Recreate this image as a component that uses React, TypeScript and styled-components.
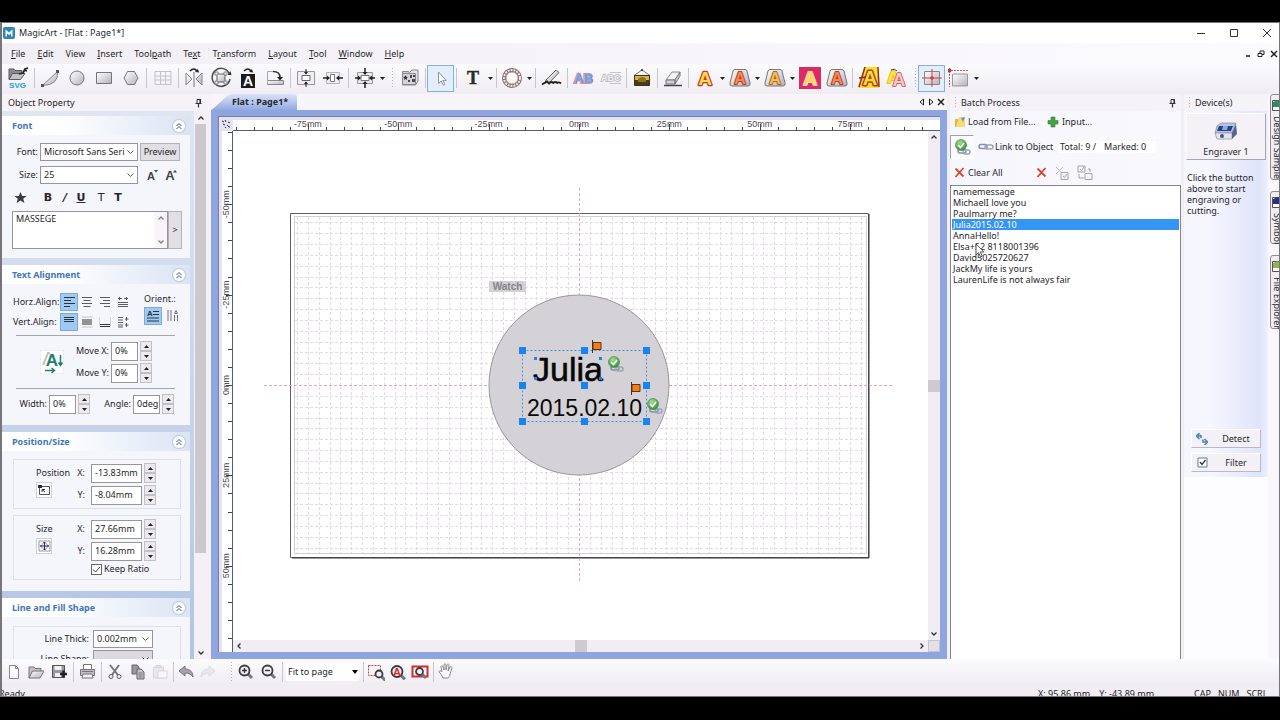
import React, { ReactNode } from "react";
import styled, { createGlobalStyle, css } from "styled-components";

const uiFont = `"Noto Sans", "Liberation Sans", sans-serif`;

const GlobalStyle = createGlobalStyle`
  *, *::before, *::after { box-sizing: border-box; }
  body { margin: 0; background: #000; color: #26262b; font: 9px/12px ${uiFont}; }
  button, input, select, textarea { font: inherit; color: inherit; margin: 0; padding: 0; border-radius: 0; }
  button { background: none; border: 0; white-space: nowrap; }
  svg { display: block; flex: none; }
`;

/* ---------- window ---------- */

const Screen = styled.div`
  height: 100vh;
  min-height: 480px;
  padding: 22px 0 23px;
  display: flex;
  flex-direction: column;
`;
const AppWindow = styled.div`
  flex: 1;
  min-height: 0;
  display: flex;
  flex-direction: column;
  overflow: hidden;
  background: #f9f7fb;
  border: 1px solid #77757a;
  border-width: 1px 1px 1px 2px;
`;
const TitleBar = styled.header`
  flex: none;
  height: 20px;
  display: flex;
  align-items: center;
  gap: 4px;
  padding: 0 7px 0 1px;
  background: #fff;
`;
const Title = styled.h1`
  flex: 1;
  margin: 0;
  font-size: 9px;
  font-weight: 400;
`;
const WindowButtons = styled.div`
  display: flex;
  gap: 23px;
`;
const PlainButton = styled.button`
  display: flex;
  align-items: center;
  justify-content: center;
  min-width: 10px;
  min-height: 10px;
`;
const MenuBar = styled.nav`
  flex: none;
  height: 21px;
  display: flex;
  align-items: center;
  justify-content: space-between;
  padding-left: 9px;
  background: linear-gradient(90deg, #f2eff4, #fbfafd);
`;
const MenuList = styled.div`
  display: flex;
  gap: 12px;
`;
const ChildButtons = styled.div`
  display: flex;
  gap: 3px;
`;

/* ---------- tool bars ---------- */

const Toolbar = styled.div<{ $h: number }>`
  flex: none;
  height: ${(p) => p.$h}px;
  display: flex;
  align-items: center;
  padding: 0 0 2px 1px;
  background: linear-gradient(180deg, #fbfafc, #efedf2);
`;
const ToolButton = styled.button<{ $w?: number; $on?: boolean; $dim?: boolean }>`
  flex: none;
  width: ${(p) => p.$w ?? 27}px;
  height: 27px;
  display: flex;
  align-items: center;
  justify-content: center;
  opacity: ${(p) => (p.$dim ? 0.4 : 1)};
  ${(p) =>
    p.$on &&
    css`
      background: #e3eefa;
      border: 1px solid #7fb2de;
    `}
`;
const Separator = styled.span<{ $w?: number }>`
  flex: none;
  width: ${(p) => p.$w ?? 4}px;
  height: 20px;
  background: linear-gradient(#c9c6cd, #c9c6cd) center / 1px 100% no-repeat;
`;
const Grip = styled.span<{ $h?: number; $gap?: number }>`
  flex: none;
  width: 4px;
  height: ${(p) => p.$h ?? 20}px;
  margin-left: ${(p) => p.$gap ?? 0}px;
  background: repeating-linear-gradient(180deg, #b5b2ba 0 1px, transparent 1px 3px) 1px 0 / 1px 100% no-repeat;
`;
const ZoomSelect = styled.select`
  width: 73px;
  height: 18px;
  margin: 0 2px;
  padding-left: 2px;
  border: 0;
  appearance: none;
  background: #fff url("data:image/svg+xml,%3Csvg xmlns='http://www.w3.org/2000/svg' width='6' height='4'%3E%3Cpath d='M0 0h6L3 4z'/%3E%3C/svg%3E") right 1px center no-repeat;
`;
const StatusBar = styled.footer`
  flex: none;
  height: 10px;
  display: flex;
  padding-top: 2px;
  overflow: hidden;
  background: #f0eef2;
  white-space: pre;
`;
const StatusReady = styled.span`
  flex: 1;
  margin-left: -3px;
`;
const StatusCoords = styled.span`
  display: flex;
  gap: 9px;
  width: 156px;
`;
const StatusKeys = styled.span`
  display: flex;
  gap: 7px;
  width: 85px;
`;

/* ---------- docking layout ---------- */

const Work = styled.main`
  flex: 1;
  min-height: 0;
  display: flex;
`;
const PanelHeader = styled.div`
  flex: none;
  height: 17px;
  display: flex;
  align-items: center;
  gap: 3px;
  background: #f5f3f7;
  h2 { flex: 1; margin: 0; font-size: 9px; font-weight: 400; }
`;
const LeftPanel = styled.aside`
  flex: none;
  width: 209px;
  display: flex;
  flex-direction: column;
  background: #f5f0f5;
  ${PanelHeader} { padding: 0 8px 0 6px; }
`;
const LeftBody = styled.div`
  flex: 1;
  min-height: 0;
  display: flex;
`;
const Groups = styled.div`
  flex: 1;
  min-width: 0;
  overflow: hidden;
  display: flex;
  flex-direction: column;
  gap: 7px;
  padding: 5px 4px 0 0;
  background: linear-gradient(180deg, #dfe6f2, #b2c4e4);
`;
const Group = styled.section`
  flex: none;
  background: #f5f5fc;
`;
const GroupHeader = styled.header`
  height: 19px;
  display: flex;
  align-items: center;
  justify-content: space-between;
  padding: 0 5px 0 10px;
  background: linear-gradient(90deg, #fff 30%, #dbe4f4);
  h3 { margin: 0; font-size: 9px; font-weight: 700; color: #3f76b8; }
`;
const RoundButton = styled.button`
  width: 12px;
  height: 12px;
  border-radius: 50%;
  background: #fff;
  box-shadow: 0 0 1px 1px #b9c9e0;
  display: flex;
  align-items: center;
  justify-content: center;
`;
const GroupBody = styled.div<{ $pad: string; $gap?: number }>`
  display: flex;
  flex-direction: column;
  gap: ${(p) => p.$gap ?? 0}px;
  padding: ${(p) => p.$pad};
`;
const Row = styled.div<{ $h?: number; $gap?: number; $pad?: string; $items?: string }>`
  display: flex;
  align-items: ${(p) => p.$items ?? "center"};
  height: ${(p) => (p.$h ? p.$h + "px" : "auto")};
  gap: ${(p) => p.$gap ?? 2}px;
  padding: ${(p) => p.$pad ?? "0"};
`;
const Column = styled.div<{ $gap?: number; $w?: number; $pad?: string }>`
  display: flex;
  flex-direction: column;
  gap: ${(p) => p.$gap ?? 2}px;
  width: ${(p) => (p.$w ? p.$w + "px" : "auto")};
  padding: ${(p) => p.$pad ?? "0"};
`;
const Label = styled.label<{ $w?: number; $left?: boolean; $end?: number }>`
  flex: none;
  width: ${(p) => (p.$w ? p.$w + "px" : "auto")};
  padding-right: ${(p) => p.$end ?? 0}px;
  text-align: ${(p) => (p.$left ? "left" : "right")};
  white-space: nowrap;
`;
const Select = styled.select<{ $w: number; $grey?: boolean }>`
  flex: none;
  width: ${(p) => p.$w}px;
  height: 18px;
  padding: 0 12px 0 3px;
  border: 1px solid #98969c;
  appearance: none;
  background: ${(p) => (p.$grey ? "#dcdade" : "#fff")}
    url("data:image/svg+xml,%3Csvg xmlns='http://www.w3.org/2000/svg' width='7' height='5'%3E%3Cpath d='M0.5 0.5l3 3 3-3' fill='none' stroke='%23555'/%3E%3C/svg%3E") right 3px center no-repeat;
`;
const PushButton = styled.button<{ $w: number; $h?: number }>`
  flex: none;
  width: ${(p) => p.$w}px;
  height: ${(p) => p.$h ?? 18}px;
  background: #e1dfe3;
  border: 1px solid #b4b2b7;
  display: flex;
  align-items: center;
  justify-content: center;
`;
const GlyphButton = styled.button<{ $on?: boolean; $w?: number; $light?: boolean }>`
  flex: none;
  width: ${(p) => p.$w ?? 18}px;
  height: 18px;
  display: flex;
  align-items: center;
  justify-content: center;
  font: ${(p) => (p.$light ? 400 : 700)} 11px/14px "DejaVu Sans", sans-serif;
  ${(p) =>
    p.$on &&
    css`
      background: #a0caf6;
      border: 1px solid #7fa9da;
    `}
`;
const MessageBox = styled.div`
  flex: none;
  width: 156px;
  height: 38px;
  display: flex;
  border: 1px solid #98969c;
  background: #fff;
`;
const MessageText = styled.textarea`
  flex: 1;
  min-width: 0;
  border: 0;
  resize: none;
  overflow: hidden;
  padding: 1px 3px;
  background: none;
`;
const ScrollTrack = styled.div<{ $w: number }>`
  flex: none;
  width: ${(p) => p.$w}px;
  display: flex;
  flex-direction: column;
  align-items: center;
  justify-content: space-between;
  background: #f3eff4;
  opacity: 0.6;
`;
const Divider = styled.hr`
  width: 159px;
  height: 1px;
  margin: 0;
  border: 0;
  background: #a6a4ac;
`;
const NumberInput = styled.input<{ $w: number }>`
  flex: none;
  width: ${(p) => p.$w}px;
  height: 19px;
  padding: 0 0 1px 3px;
  border: 1px solid #98969c;
  background: #fff;
`;
const Spinner = styled.div`
  flex: none;
  width: 12px;
  height: 20px;
  display: flex;
  flex-direction: column;
  button {
    flex: 1;
    display: flex;
    align-items: center;
    justify-content: center;
    border: 1px solid #c2c0c5;
    background: #eceaee;
  }
`;
const Frame = styled.div<{ $pad: string }>`
  display: flex;
  padding: ${(p) => p.$pad};
  border: 1px solid #dfdfe8;
`;
const CheckBox = styled.input`
  appearance: none;
  width: 11px;
  height: 11px;
  border: 1px solid #666;
  background: #fff url("data:image/svg+xml,%3Csvg xmlns='http://www.w3.org/2000/svg' width='9' height='9'%3E%3Cpath d='M1 4.5l2.5 2.5L8 2' fill='none' stroke='%23444'/%3E%3C/svg%3E") center no-repeat;
`;
const TinyButton = styled.button`
  width: 16px;
  height: 16px;
  border: 1px solid #d0d0d8;
  background: #fff;
  display: flex;
  align-items: center;
  justify-content: center;
`;
const SideScroll = styled.div`
  flex: none;
  width: 17px;
  display: flex;
  flex-direction: column;
  align-items: center;
  padding: 1px 4px 0 0;
`;
const SideThumb = styled.div`
  width: 11px;
  flex: 0 1 429px;
  margin-bottom: auto;
  background: #cbc9cd;
`;
const ScrollButton = styled.button`
  flex: none;
  width: 12px;
  height: 12px;
  display: flex;
  align-items: center;
  justify-content: center;
`;

/* ---------- document ---------- */

const DocumentArea = styled.section`
  flex: 1;
  min-width: 0;
  display: flex;
  flex-direction: column;
  background: #f7f5f9;
`;
const TabRow = styled.div`
  flex: none;
  height: 16px;
  display: flex;
  justify-content: space-between;
`;
const DocTab = styled.button`
  width: 86px;
  height: 16px;
  padding-left: 21px;
  text-align: left;
  font-weight: 700;
  background: linear-gradient(180deg, #dbe2f6, #93aae2);
  clip-path: polygon(0 100%, 4px 13px, 16px 2px, 20px 0, 84px 0, 100% 2px, 100% 100%);
`;
const TabControls = styled.div`
  display: flex;
  align-items: center;
  padding-right: 1px;
`;
const BlueFrame = styled.div`
  flex: 1;
  min-height: 0;
  display: flex;
  padding: 6px 7px 7px;
  background: #8fa5df;
`;
const Sheet = styled.div`
  flex: 1;
  min-width: 0;
  display: grid;
  grid-template: 14px minmax(0, 1fr) 12px / 14px minmax(0, 1fr) 12px;
  border: 1px solid #7b7f96;
  border-width: 1px 0 0 1px;
  background: #e3e3f4;
`;
const RulerCorner = styled.div`
  display: flex;
  align-items: center;
  justify-content: center;
`;
const TopRuler = styled.svg`
  grid-column: 2 / 4;
  width: 100%;
  height: 14px;
`;
const LeftRuler = styled.svg`
  grid-row: 2 / 4;
  width: 14px;
  height: 100%;
`;
const Drawing = styled.svg`
  width: 100%;
  height: 100%;
  background: #fff;
`;
const BarV = styled.div`
  display: flex;
  flex-direction: column;
  align-items: center;
  justify-content: space-between;
  background: #f1eef3;
`;
const BarH = styled.div`
  display: flex;
  align-items: center;
  justify-content: space-between;
  background: #f1eef3;
`;
const Thumb = styled.div`
  width: 12px;
  height: 12px;
  background: #cdcbcf;
`;
const Corner = styled.div`
  border: 1px solid #c6c4c9;
  background: #e3dfe4;
`;

/* ---------- batch + device panels ---------- */

const BatchPanel = styled.aside`
  flex: none;
  width: 237px;
  display: flex;
  flex-direction: column;
  padding: 0 3px;
  background: #f2eff4;
  ${PanelHeader} { padding: 0 4px; }
`;
const BatchTools = styled.div`
  flex: none;
  height: 74px;
  background: linear-gradient(90deg, #f6f6fd, #f9f8fc);
`;
const CommandButton = styled.button<{ $w?: number; $gap?: number }>`
  display: flex;
  align-items: center;
  gap: ${(p) => p.$gap ?? 2}px;
  width: ${(p) => (p.$w ? p.$w + "px" : "auto")};
`;
const Toggle = styled.button`
  width: 24px;
  height: 24px;
  display: flex;
  align-items: center;
  justify-content: center;
  border: 1px solid #a3a1a8;
  border-right-color: #fff;
  border-bottom-color: #fff;
  background: #fbfafd;
`;
const Counter = styled.span<{ $w: number }>`
  width: ${(p) => p.$w}px;
  padding-left: 2px;
  background: #fff;
  white-space: nowrap;
`;
const RecordList = styled.ul`
  position: relative;
  flex: 1;
  min-height: 0;
  margin: 0;
  padding: 0 1px;
  list-style: none;
  border: 1px solid #88868c;
  border-bottom: 0;
  background: #fff;
  line-height: 11px;
`;
const Record = styled.li<{ $on?: boolean }>`
  height: 11px;
  padding-left: 1px;
  ${(p) =>
    p.$on &&
    css`
      background: #3595f5;
      color: #fff;
    `}
`;
const Pointer = styled.svg`
  position: absolute;
  left: 24px;
  top: 57px;
`;
const DevicePanel = styled.aside`
  flex: none;
  width: 84px;
  display: flex;
  flex-direction: column;
  background: #fdfcfe;
  ${PanelHeader} { padding-left: 4px; }
`;
const DeviceBody = styled.div`
  flex: 0 1 366px;
  display: flex;
  flex-direction: column;
  padding: 2px 2px 5px 2px;
  background: linear-gradient(90deg, #f6f6ff 30%, #dfe4fa 90%, #eef0fd);
  p { margin: 12px 0 auto 1px; line-height: 11px; }
`;
const DeviceButton = styled.button`
  height: 47px;
  display: flex;
  flex-direction: column;
  align-items: center;
  justify-content: flex-end;
  gap: 4px;
  padding-bottom: 1px;
  border: 1px solid #fff;
  border-right-color: #a6a5b4;
  border-bottom-color: #a6a5b4;
  background: #f4f2f7;
`;
const DeviceAction = styled.button`
  width: 70px;
  height: 19px;
  margin: 0 0 5px 5px;
  display: grid;
  grid-template-columns: 20px 1fr;
  align-items: center;
  border: 1px solid #fff;
  border-right-color: #bab8c6;
  border-bottom-color: #bab8c6;
  background: #f3f1f6;
  svg { justify-self: center; }
  & + & { margin-bottom: 0; }
`;
const SideTabs = styled.div`
  flex: none;
  width: 9px;
  margin-left: 2px;
  display: flex;
  flex-direction: column;
  gap: 11px;
  overflow: hidden;
`;
const SideTab = styled.button<{ $h: number }>`
  flex: none;
  width: 18px;
  height: ${(p) => p.$h}px;
  display: flex;
  flex-direction: column;
  align-items: flex-start;
  gap: 4px;
  padding-top: 3px;
  border: 1px solid #8d8b92;
  border-radius: 3px 0 0 3px;
  background: #f0eef2;
  span { writing-mode: vertical-rl; }
`;

/* ---------- icons ---------- */

const metal = "url(#metal)";

const GradientDefs = styled.svg`
  position: absolute;
`;
const Gradients = () => (
  <GradientDefs width="0" height="0" aria-hidden="true">
    <defs>
      <linearGradient id="metal" x1="0" y1="0" x2="1" y2="1">
        <stop offset="0" stopColor="#fff" />
        <stop offset="1" stopColor="#b4b2b8" />
      </linearGradient>
      <radialGradient id="green" cx="0.4" cy="0.3" r="0.8">
        <stop offset="0" stopColor="#a5dc8e" />
        <stop offset="1" stopColor="#2c8a2f" />
      </radialGradient>
    </defs>
  </GradientDefs>
);

const Art = ({ s = 22, h, children }: { s?: number; h?: number; children: ReactNode }) => (
  <svg width={s} height={h ?? s} viewBox={`0 0 ${s} ${h ?? s}`} fill="none" stroke="#5c5a60" aria-hidden="true">
    {children}
  </svg>
);

const letter = (fill: string, stroke: string, w: number, size = 20, x = 11, y = 18) => (
  <text x={x} y={y} textAnchor="middle" fontFamily="Liberation Sans" fontWeight="700" fontSize={size} fill={fill} stroke={stroke} strokeWidth={w} paintOrder="stroke" strokeLinejoin="round">A</text>
);

const lens = (x: number, y: number, r: number) => (
  <g>
    <path d={`M${x + r * 0.7} ${y + r * 0.7}l4 4`} stroke="#77757b" strokeWidth="3" />
    <circle cx={x} cy={y} r={r} stroke="#3c3a40" strokeWidth="1.8" fill="#f2f0f4" />
  </g>
);

const raisedTile = "M6 2.500h10q1.500 0 2 1.500l3 12q.5 3-2 3H3q-2.500 0-2-3L4 4q.5-1.500 2-1.500z";

const icons: Record<string, ReactNode> = {
  svgFile: (
    <Art>
      <path d="M2 12V2h5l1 1.500h7v3H6z" fill="#8b898f" />
      <path d="M2 12.500L5.500 6.500H18l-4.500 6z" fill="#c3c1c6" />
      <path d="M12 7l4-1 2-4 3-1M17 3l3 1" stroke="#222" strokeWidth="1.800" />
      <text x="10.500" y="21" textAnchor="middle" fontFamily="Liberation Sans" fontWeight="700" fontSize="8" fill="#1f9fd2" stroke="none">SVG</text>
    </Art>
  ),
  curve: (<Art><path d="M3.500 18.500L18.500 4.500Q20 18 3.500 18.500z" fill={metal} stroke="#88868c" /><path d="M2 17h3v3H2zM17 3h3v3h-3z" fill="#555" stroke="none" /></Art>),
  ellipse: (<Art><circle cx="11" cy="11" r="7" fill={metal} stroke="#77757b" /></Art>),
  rect: (<Art><path d="M3.500 5.500h15v11h-15z" fill={metal} stroke="#77757b" /></Art>),
  hexagon: (<Art><path d="M4 11l3.500-6.500h7L18 11l-3.500 6.500h-7z" fill={metal} stroke="#77757b" /></Art>),
  grid: (<Art><path d="M3 4.500h16v13H3zM3 9h16M3 13h16M8.500 4.500v13M13.500 4.500v13" stroke="#c5c3c8" /></Art>),
  mirror: (<Art><path d="M3 6v12l6-6zM19 6v12l-6-6z" fill={metal} stroke="#88868c" /><path d="M11 5v15" stroke="#777" /><path d="M7 4q4-4 7 0" stroke="#222" strokeWidth="1.600" /><path d="M16 5.500l-4-.5 3-3z" fill="#222" stroke="none" /></Art>),
  rotate: (<Art><path d="M19.500 7A9 9 0 1 0 20 12" stroke="#4c4a50" strokeWidth="1.500" /><path d="M17.500 8h4l-1-4z" fill="#333" stroke="none" /><path d="M7 7h8v8H7z" fill={metal} /><path d="M5 5h3v3H5zM14 5h3v3h-3zM5 14h3v3H5zM14 14h3v3h-3z" fill="#eee" stroke="#88868c" /></Art>),
  rotateText: (<Art><path d="M4 7h14v14H4z" fill="#1b1b1d" stroke="none" />{letter("#fff", "none", 0, 14, 11, 19)}<path d="M7 4q4-4 7 0" stroke="#222" strokeWidth="1.500" /><path d="M16 5.500l-4-.5 3-3z" fill="#222" stroke="none" /></Art>),
  turn: (<Art><path d="M3.500 13.500h16v4h-16z" fill={metal} stroke="#88868c" /><path d="M3.500 17V4.500h7" stroke="#aaa8ae" /><path d="M9 4.500q7 0 7 6" stroke="#333" strokeWidth="1.500" /><path d="M13 10h6l-3 3.500z" fill="#222" stroke="none" /></Art>),
  centerV: (<Art><path d="M2.500 4.500h17v13h-17z" stroke="#99979d" fill="#f0eef2" /><path d="M7 8.500h8v5H7z" stroke="#666" fill="#fff" /><path d="M11 2v5M11 20v-5" stroke="#222" /><path d="M9 5l2 2.500L13 5zM9 17l2-2.500 2 2.500z" fill="#222" stroke="none" /></Art>),
  centerH: (<Art><path d="M4.500 5.500h13v11h-13z" stroke="#b5b3b8" fill="#f0eef2" /><path d="M8.500 7.500h4v7h-4z" stroke="#777" fill="#fff" /><path d="M1 11h6M21 11h-6" stroke="#222" strokeWidth="1.500" /><path d="M5 8.500L8 11l-3 2.500zM17 8.500L14 11l3 2.500z" fill="#222" stroke="none" /></Art>),
  centerBoth: (<Art><path d="M3.500 5.500h15v11h-15z" stroke="#99979d" fill="#eceaee" /><path d="M7 8.500h8v5H7z" stroke="#777" fill="#fff" /><path d="M1 11h5M21 11h-5M11 1v6M11 21v-6" stroke="#222" strokeWidth="1.500" /><path d="M4 8.500L7 11l-3 2.500zM18 8.500L15 11l3 2.500zM8.500 5l2.500 3 2.500-3zM8.500 17l2.500-3 2.500 3z" fill="#222" stroke="none" /></Art>),
  library: (<Art><path d="M3.500 4.500h6l1 1.500h6v12h-13z" fill="#d0ced3" stroke="#8a888e" /><path d="M11 5l2-2h6v11l-2.500 4" stroke="#88868c" fill="#e6e4e9" /><path d="M3.500 6.500h13v11h-13z" fill="#d6d4d8" stroke="#8a888e" /><path d="M6.500 8l.8 1.700 1.700.2-1.300 1.200.4 1.800-1.600-.9-1.600.9.4-1.800L4 9.900l1.700-.2z" fill="#333" stroke="none" /><path d="M11 8h2v3h-2zM13 12h3v3h-3zM14 8h2v2h-2zM9 13h2v2H9z" fill="#4c4a50" stroke="none" /></Art>),
  arrow: (<Art><path d="M8.500 5v11.500l2.700-2.500 2 4.200 1.600-.8-2-4h3.400z" fill="#fff" stroke="#8b94a2" /></Art>),
  text: (<Art><text x="11" y="17" textAnchor="middle" fontFamily="Liberation Serif" fontWeight="700" fontSize="18" fill="#2b2b2d" stroke="#2b2b2d" strokeWidth=".4">T</text></Art>),
  ring: (<Art><circle cx="11" cy="11" r="8" stroke="#7d7076" strokeWidth="4" /><circle cx="11" cy="11" r="8" stroke="#f3ebea" strokeWidth="2" strokeDasharray="2 1" /><circle cx="11" cy="11" r="6" fill="#fff" stroke="#c98a86" /></Art>),
  pen: (<Art><path d="M5 13L15 3l3 2.500L9 15l-5 1z" fill={metal} stroke="#66646a" /><path d="M1 17.500l5-3 2 2c2-2 4-2 4 0 1-2 4-2 4 0 1-2 3-1 4 0" stroke="#222" strokeWidth="1.800" /></Art>),
  ab: (<Art><g fontFamily="Liberation Sans" fontWeight="700" fontSize="13" fill="#4db5ec" stroke="#ef7f9e" strokeWidth="2" paintOrder="stroke"><text x="1" y="16">AB</text></g></Art>),
  abc: (<Art><g fontFamily="Liberation Sans" fontWeight="700" fontSize="9" fill="#f4f2f6" stroke="#b5b3b8" strokeWidth="1.400" paintOrder="stroke"><text x="1" y="14">ABC</text></g><path d="M10 5.500h11M10 16.500h11" stroke="#c5c3c8" /></Art>),
  picture: (<Art><path d="M3 8.500L11 3l8 5.500" stroke="#777" /><circle cx="11" cy="3" r="1" fill="#222" stroke="none" /><path d="M3.500 8.500h15v10h-15z" fill="#4a3c10" stroke="#333" /><path d="M4 9h14v4H4z" fill="#d9b43c" stroke="none" /><path d="M7 13a4 3 0 0 1 8 0v2H7z" fill="#8f7420" stroke="none" /></Art>),
  eraser: (<Art><path d="M4 13l6-8h8l-5 8z" fill="#f5f3f7" stroke="#88868c" /><path d="M4 13h9v4H4zM13 13l5-8v4l-5 8z" fill="#d4d2d7" stroke="#77757b" /><path d="M2 18.500h18" stroke="#444" strokeWidth="1.500" /></Art>),
  aPlain: (<Art>{letter("#ffe03a", "#c9304c", 2.5, 19)}</Art>),
  aBox: (<Art><path d={raisedTile} fill={metal} stroke="#77757b" />{letter("#f58a52", "#b5412c", 2, 16, 11, 17)}</Art>),
  aBoxGold: (<Art><path d={raisedTile} fill={metal} stroke="#77757b" />{letter("#f6bf50", "#a9642c", 2, 16, 11, 17)}</Art>),
  aPink: (<Art><path d="M0 0h22v22H0z" fill="#dc2b63" stroke="none" />{letter("#ffdc4e", "#fbd0dc", 2, 19)}</Art>),
  aStripe: (<Art><path d="M6 0h14l1 21H0z" fill="#f9df2f" stroke="none" />{letter("#f9df2f", "#b83a34", 3, 20, 12, 18)}<path d="M7 0L1 20M20 0l1 20M1 11l7-1" stroke="#8a3026" strokeWidth="1.500" /></Art>),
  aDouble: (<Art>{letter("#ffe246", "#e8c31c", 2, 16, 8, 16)}{letter("#f8c9c0", "#c04a50", 1.5, 18, 14, 19)}<path d="M6 3q4-2 6 1" stroke="#444" /></Art>),
  crosshair: (<Art><path d="M3.500 4.500h15v13h-15z" fill={metal} stroke="#88868c" /><path d="M1 11h20M11 2v18" stroke="#cf3e42" /><circle cx="11" cy="11" r="1.800" fill="#cf3e42" stroke="none" /></Art>),
  rulerGuide: (<Art><path d="M4.500 7h15v12h-15z" fill={metal} stroke="#99979d" /><path d="M0 3.500h21M1.500 1v19" stroke="#cf5a5e" strokeDasharray="2 1" /><circle cx="1.500" cy="3.500" r="2" fill="#b13a3e" stroke="none" /></Art>),
  newFile: (<Art s={16}><path d="M3.500 1.500h6l3 3v10h-9z" fill="#fdfdfd" stroke="#88868c" /><path d="M9.500 1.500v3h3" stroke="#88868c" /></Art>),
  open: (<Art s={16}><path d="M1 14V3h5l1 1.500h6V7" fill="#c2c0c5" stroke="#77757b" /><path d="M1 14l3.500-7H16l-4 7z" fill={metal} stroke="#77757b" /></Art>),
  save: (<Art s={16}><path d="M1.500 1.500h12v12h-12z" fill="#99979d" stroke="#555" /><path d="M3.500 2h7v4h-7zM4 9h6v4H4z" fill="#f3f1f5" stroke="none" /><path d="M12.500 6.500v7M9 10h7" stroke="#222" strokeWidth="2.500" /></Art>),
  print: (<Art s={17}><path d="M4.500 1.500h8v5h-8z" fill="#fff" stroke="#77757b" /><path d="M1.500 6.500h14v6h-14z" fill="#c0bec3" stroke="#77757b" /><path d="M4 11h9l1 4H3z" fill="#f3f1f5" stroke="#77757b" /><path d="M3 8.500h11" stroke="#77757b" /></Art>),
  cut: (<Art s={16}><path d="M3 1l8 10M12 1L5 11" stroke="#77757b" strokeWidth="2" /><circle cx="4" cy="12.500" r="2" /><circle cx="12" cy="12.500" r="2" /></Art>),
  copy: (<Art s={16}><path d="M2 1h5l2 2v7H2z" fill="#99979d" stroke="#66646a" /><path d="M7 5h4l3 3v7H7z" fill="#c5c3c8" stroke="#66646a" /><path d="M8.500 9h4M8.500 11h4M8.500 13h4" stroke="#77757b" /></Art>),
  paste: (<Art s={16}><path d="M1.500 3h10v11h-10z" fill="#d8d6da" stroke="#aaa8ad" /><path d="M4 1.500h5v2H4z" fill="#bbb" stroke="#aaa8ad" /><path d="M6 7h9v7H6z" fill="#fff" stroke="#aaa8ad" /></Art>),
  undo: (<Art s={16}><path d="M1 7l6-5v3c5 0 8 3 8 8-2-3-4-4-8-4v3z" fill="#a5a3a8" stroke="#77757b" /></Art>),
  redo: (<Art s={16}><path d="M15 7L9 2v3c-5 0-8 3-8 8 2-3 4-4 8-4v3z" fill="#d9d7dc" stroke="#bab8bd" /></Art>),
  zoomIn: (<Art s={16}>{lens(6.5, 6.5, 5)}<path d="M4 6.500h5M6.500 4v5" stroke="#333" strokeWidth="1.400" /></Art>),
  zoomOut: (<Art s={16}>{lens(6.5, 6.5, 5)}<path d="M4 6.500h5" stroke="#333" strokeWidth="1.400" /></Art>),
  zoomBox: (<Art s={18}><path d="M1.500 2.500h12v10h-12z" stroke="#c4474c" strokeDasharray="2 1" />{lens(12, 11, 3.5)}</Art>),
  zoomText: (<Art s={16}>{lens(7, 7.5, 5.5)}{letter("#d92a2a", "none", 0, 11, 7, 11.5)}</Art>),
  zoomPage: (<Art s={18}><path d="M1.500 3.500h15v10h-15z" stroke="#d92a2a" strokeWidth="2" fill="#fff" />{lens(8.5, 8.5, 3.5)}</Art>),
  hand: (<Art s={17}><path d="M5 15c-1-3-3-5-4-6 0-2 2-1 3 0L3 4c0-2 2-1 2 0l1 3V2c0-2 2-1 2 0v5l1-5c1-2 2-1 2 1l-1 5 2-4c1-1 2 0 2 1l-2 6c0 2-1 3-2 4z" fill="#fbfafc" stroke="#8a888e" /></Art>),
  pin: (<Art s={9} h={10}><path d="M3 1.500h3.500v4H3z" stroke="#333" /><path d="M6 1v5M1.500 5.500h6M4.500 6v3.500" stroke="#333" strokeWidth="1.200" /></Art>),
  chevrons: (<Art s={8}><path d="M1.500 4L4 1.500 6.500 4M1.500 7L4 4.500 6.500 7" stroke="#36547e" /></Art>),
  up: (<Art s={6} h={4}><path d="M.5 3.500L3 1l2.500 2.500" stroke="#333" strokeWidth="1.300" /></Art>),
  down: (<Art s={6} h={4}><path d="M.5 .5L3 3 5.500.5" stroke="#333" strokeWidth="1.300" /></Art>),
  left: (<Art s={4} h={6}><path d="M3.500 .5L1 3l2.500 2.500" stroke="#333" strokeWidth="1.300" /></Art>),
  right: (<Art s={4} h={6}><path d="M.5 .5L3 3 .5 5.500" stroke="#333" strokeWidth="1.300" /></Art>),
  spinUp: (<Art s={5} h={3}><path d="M0 3h5L2.500 0z" fill="#222" stroke="none" /></Art>),
  spinDown: (<Art s={5} h={3}><path d="M0 0h5L2.500 3z" fill="#222" stroke="none" /></Art>),
  close: (<Art s={8}><path d="M1 1l6 6M7 1L1 7" stroke="#222" strokeWidth="1.500" /></Art>),
  smaller: (<Art s={12} h={14}>{letter("#444", "none", 0, 11, 5, 12)}<path d="M8 2h4l-2 2.500z" fill="#444" stroke="none" /></Art>),
  bigger: (<Art s={12} h={14}>{letter("#444", "none", 0, 13, 5, 12)}<path d="M8 4.500h4L10 2z" fill="#444" stroke="none" /></Art>),
  star: (<Art s={13}><path d="M6.500 1l1.700 4H12.500l-3.300 2.700 1.200 4.300-3.900-2.500L2.600 12l1.200-4.300L.5 5h4.300z" fill="#3b393f" stroke="none" /></Art>),
  alignL: (<Art s={12}><path d="M1 1.500h11M1 4.500h7M1 7.500h11M1 10.500h6" stroke="#333" /></Art>),
  alignC: (<Art s={12}><path d="M1 1.500h10M2.500 4.500h7M1 7.500h10M2.500 10.500h7" /></Art>),
  alignR: (<Art s={12}><path d="M1 1.500h10M4 4.500h7M1 7.500h10M5 10.500h6" /></Art>),
  alignJ: (<Art s={12}><path d="M1 2.500h4M7 2.500h4M2.500 1v3M9.500 1v3M1 6.500h10M1 8.500h10M1 10.500h10" /></Art>),
  vTop: (<Art s={12}><path d="M1 1.500h10M1 3.500h10M1 5.500h10" stroke="#333" /></Art>),
  vMid: (<Art s={12}><path d="M1 4h10M1 6h10M1 8h10" stroke="#333" /><path d="M.5 1h11M.5 11h11" stroke="#c5c3c8" /></Art>),
  vBottom: (<Art s={12}><path d="M1 8.500h10M1 10.500h10" stroke="#333" /><path d="M.5 1v9M11.500 1v9" stroke="#d4d2d7" /></Art>),
  vJust: (<Art s={12}><path d="M1 1.500h5M1 4h5M1 6.500h5M1 9h5M1 11h5M9.500 1v4M8 3h3.500M9.500 7v4M8 9h3.500" /></Art>),
  orientH: (<Art s={14}>{letter("#333", "none", 0, 8, 4, 7)}<path d="M7 2.500h6M7 5.500h6M1 9h12M1 12h12" stroke="#333" /></Art>),
  orientV: (<Art s={14}><path d="M2 1v11M5 1v11M8.500 6v6M11.500 6v6M8.500 4.500l1.500-3 1.500 3z" stroke="#77757b" /></Art>),
  warp: (<Art s={24}><path d="M0 0h24v24H0z" fill="#fff" stroke="#dedce6" /><path d="M3 15L8 3h2" stroke="#c4c2c8" strokeWidth="2" />{letter("#1d8068", "none", 0, 17, 12, 16)}<path d="M20.500 5v10M18.500 12.500l2 3 2-3M5 20.500h9M11.500 18l3 2.500-3 2.500" stroke="#1d8068" strokeWidth="1.500" /></Art>),
  anchor: (<Art s={13} h={12}><path d="M1.500 2.500h10v8h-10z" stroke="#555" /><path d="M0 1h4v3H0z" fill="#222a66" stroke="none" /><path d="M7 8L4 5.500M4 8V5.500h3" stroke="#333" /></Art>),
  resize: (<Art s={13} h={12}><path d="M1 1h11v10H1z" stroke="#99979d" /><path d="M6.500 2v8M2.500 6h8M5 3.500L6.500 2 8 3.500M5 8.500L6.500 10 8 8.500M4 4.500L2.500 6 4 7.500M9 4.500L10.500 6 9 7.500" stroke="#23235a" /></Art>),
  folder: (<Art s={12}><path d="M1 3h5v8H1z" fill="#e5b93a" stroke="none" /><path d="M5 1h6v10H2z" fill="#f6dc77" stroke="none" /><path d="M7 2l4-1-2 5z" fill="#6b93c9" stroke="none" /></Art>),
  plus: (<Art s={12}><path d="M4 1h4v3.500h3v3.500H8v3H4V8H1V4.500h3z" fill="#45a344" stroke="#2f7f36" strokeWidth=".6" /></Art>),
  link: (<Art s={16} h={8}><rect x="1" y="1.500" width="8" height="4" rx="2" stroke="#8292ac" strokeWidth="1.500" /><rect x="7" y="2" width="8" height="4" rx="2" stroke="#9aa6ba" strokeWidth="1.500" /></Art>),
  linked: (<Art s={18}><rect x="5" y="11" width="8" height="4" rx="2" stroke="#8292ac" strokeWidth="1.500" /><rect x="10" y="12" width="7" height="4" rx="2" stroke="#9aa6ba" strokeWidth="1.500" /><circle cx="8" cy="7" r="5.500" fill="url(#green)" stroke="#3a7f3c" strokeWidth=".6" /><path d="M5 7l2.500 2.500L11 5" stroke="#fff" strokeWidth="1.600" /></Art>),
  redX: (<Art s={11}><path d="M1.500 1.500l8 8M9.500 1L1.500 10" stroke="#e0452f" strokeWidth="1.800" /></Art>),
  uncheckAll: (<Art s={14}><path d="M1 1l7 7M8 1L1 8" stroke="#bbb9be" /><path d="M6 6.500h7v7H6z" fill="#f3f1f6" stroke="#aaa8ae" /><path d="M8 10l1.500 1.500L12 8" stroke="#aaa8ae" /></Art>),
  invert: (<Art s={16}><path d="M1 1h7v6H1zM8 8.500h7v6H8z" fill="#f7f6fa" stroke="#a3a1a8" /><path d="M3 4l1.500 1.500L7 2M2 9v4h5M11 4h2v3" stroke="#a3a1a8" /></Art>),
  engraver: (<Art s={26} h={20}><path d="M4 4l4-3h15l-4 10H2z" fill="#b9c3dc" stroke="#7f8bab" strokeWidth=".7" /><path d="M6 4h14l-2 5H4z" fill="#28418a" stroke="none" /><path d="M10 4h5l-1 4H9z" fill="#8fa7dc" stroke="none" /><path d="M2 11h17v6H4z" fill="#e3e5ee" stroke="#8c93a8" strokeWidth=".7" /><path d="M19 11l4-9 1 10-5 5z" fill="#56658f" stroke="none" /><circle cx="9" cy="14" r="2" fill="#475680" stroke="none" /></Art>),
  detect: (<Art s={12}><path d="M3 2.500h2M3.500 0L.5 3l3 3M2 3h3v2M8.500 6l3 3-3 3M10 9H7V6.500" stroke="#4a86b8" strokeWidth="1.700" /></Art>),
  filter: (<Art s={11}><path d="M1 1h9v9H1z" fill="#fff" stroke="#66799c" /><path d="M3 5l2 2.500L8.500 3" stroke="#333" strokeWidth="1.300" /></Art>),
};

const tool = (name: string, label: string, props: { $w?: number; $on?: boolean; $dim?: boolean } = {}) => (
  <ToolButton aria-label={label} {...props}>{icons[name]}</ToolButton>
);
const Caret = () => <ToolButton $w={8} aria-label="More options">{icons.spinDown}</ToolButton>;

/* ---------- pieces ---------- */

const menus: [string, number][] = [
  ["File", 0], ["Edit", 0], ["View", -1], ["Insert", 0], ["Toolpath", 4], ["Text", 2],
  ["Transform", 1], ["Layout", 0], ["Tool", 0], ["Window", 0], ["Help", 0],
];

const Spin = ({ name }: { name: string }) => (
  <Spinner>
    <button aria-label={`Increase ${name}`}>{icons.spinUp}</button>
    <button aria-label={`Decrease ${name}`}>{icons.spinDown}</button>
  </Spinner>
);

const NumberField = ({ id, label, lw, w, value, end = 0 }: { id: string; label: string; lw: number; w: number; value: string; end?: number }) => (
  <Row $h={20}>
    <Label htmlFor={id} $w={lw} $end={end}>{label}</Label>
    <NumberInput id={id} $w={w} defaultValue={value} />
    <Spin name={label} />
  </Row>
);

const PropertyGroup = ({ title, children }: { title: string; children: ReactNode }) => (
  <Group>
    <GroupHeader>
      <h3>{title}</h3>
      <RoundButton aria-label={`Collapse ${title}`}>{icons.chevrons}</RoundButton>
    </GroupHeader>
    {children}
  </Group>
);

const ObjectProperty = () => (
  <LeftPanel>
    <PanelHeader>
      <h2>Object Property</h2>
      {icons.pin}
    </PanelHeader>
    <LeftBody>
      <Groups>
        <PropertyGroup title="Font">
          <GroupBody $pad="8px 8px 9px 10px" $gap={5}>
            <Row>
              <Label htmlFor="font" $w={26}>Font:</Label>
              <Select id="font" $w={98}><option>Microsoft Sans Seri</option></Select>
              <PushButton $w={40}>Preview</PushButton>
            </Row>
            <Row>
              <Label htmlFor="size" $w={26}>Size:</Label>
              <Select id="size" $w={98}><option>25</option></Select>
              <Row $gap={1} $pad="0 0 0 3px">
                <GlyphButton aria-label="Smaller text">{icons.smaller}</GlyphButton>
                <GlyphButton aria-label="Larger text">{icons.bigger}</GlyphButton>
              </Row>
            </Row>
            <Row $h={17} $gap={0}>
              <GlyphButton $w={16} aria-label="Favourite">{icons.star}</GlyphButton>
              <Row $gap={0} $pad="0 0 0 11px">
                <GlyphButton>B</GlyphButton>
                <GlyphButton $w={16}><i>/</i></GlyphButton>
                <GlyphButton $w={16}><u>U</u></GlyphButton>
                <GlyphButton $w={24} $light>T</GlyphButton>
                <GlyphButton $w={10}>T</GlyphButton>
              </Row>
            </Row>
            <Row $gap={0}>
              <MessageBox>
                <MessageText aria-label="Message" defaultValue="MASSEGE" />
                <ScrollTrack $w={13}>
                  <ScrollButton aria-label="Scroll up">{icons.up}</ScrollButton>
                  <ScrollButton aria-label="Scroll down">{icons.down}</ScrollButton>
                </ScrollTrack>
              </MessageBox>
              <PushButton $w={14} $h={38}>&gt;</PushButton>
            </Row>
          </GroupBody>
        </PropertyGroup>

        <PropertyGroup title="Text Alignment">
          <GroupBody $pad="9px 8px 11px 11px">
            <Row $gap={12} $items="flex-start">
              <Column>
                <Row $gap={0}>
                  <Label $w={45} $left as="span">Horz.Align:</Label>
                  <Row $gap={0} $pad="0 0 0 2px">
                    <GlyphButton $on aria-label="Left">{icons.alignL}</GlyphButton>
                    <GlyphButton aria-label="Centre">{icons.alignC}</GlyphButton>
                    <GlyphButton aria-label="Right">{icons.alignR}</GlyphButton>
                    <GlyphButton aria-label="Justify">{icons.alignJ}</GlyphButton>
                  </Row>
                </Row>
                <Row $gap={0}>
                  <Label $w={45} $left as="span">Vert.Align:</Label>
                  <Row $gap={0} $pad="0 0 0 2px">
                    <GlyphButton $on aria-label="Top">{icons.vTop}</GlyphButton>
                    <GlyphButton aria-label="Middle">{icons.vMid}</GlyphButton>
                    <GlyphButton aria-label="Bottom">{icons.vBottom}</GlyphButton>
                    <GlyphButton aria-label="Spread">{icons.vJust}</GlyphButton>
                  </Row>
                </Row>
              </Column>
              <Column $gap={2}>
                <Label $left as="span">Orient.:</Label>
                <Row $gap={2}>
                  <GlyphButton $on aria-label="Horizontal">{icons.orientH}</GlyphButton>
                  <GlyphButton aria-label="Vertical">{icons.orientV}</GlyphButton>
                </Row>
              </Column>
            </Row>
            <Row $h={9} $pad="0 0 0 3px"><Divider /></Row>
            <Row $gap={9} $pad="1px 0 0 27px">
              <PlainButton aria-label="Warp text">{icons.warp}</PlainButton>
              <Column>
                <NumberField id="movex" label="Move X:" lw={36} w={27} value="0%" />
                <NumberField id="movey" label="Move Y:" lw={36} w={27} value="0%" />
              </Column>
            </Row>
            <Row $h={11} $pad="0 0 0 3px"><Divider /></Row>
            <Row $gap={9}>
              <NumberField id="width" label="Width:" lw={34} w={27} value="0%" />
              <NumberField id="angle" label="Angle:" lw={32} w={27} value="0deg" />
            </Row>
          </GroupBody>
        </PropertyGroup>

        <PropertyGroup title="Position/Size">
          <GroupBody $pad="8px 9px 11px 11px" $gap={6}>
            <Frame $pad="3px 0 3px 22px">
              <Column $w={33} $gap={3} $pad="4px 0 0">
                <Label as="span" $left>Position</Label>
                <TinyButton aria-label="Anchor">{icons.anchor}</TinyButton>
              </Column>
              <Column>
                <NumberField id="posx" label="X:" lw={20} end={4} w={51} value="-13.83mm" />
                <NumberField id="posy" label="Y:" lw={20} end={4} w={51} value="-8.04mm" />
              </Column>
            </Frame>
            <Frame $pad="3px 0 4px 22px">
              <Column $w={33} $gap={3} $pad="4px 0 0">
                <Label as="span" $left>Size</Label>
                <TinyButton aria-label="Resize">{icons.resize}</TinyButton>
              </Column>
              <Column>
                <NumberField id="sizex" label="X:" lw={20} end={4} w={51} value="27.66mm" />
                <NumberField id="sizey" label="Y:" lw={20} end={4} w={51} value="16.28mm" />
                <Row $pad="0 0 0 22px">
                  <CheckBox type="checkbox" id="ratio" defaultChecked />
                  <Label htmlFor="ratio" $left>Keep Ratio</Label>
                </Row>
              </Column>
            </Frame>
          </GroupBody>
        </PropertyGroup>

        <PropertyGroup title="Line and Fill Shape">
          <GroupBody $pad="9px 9px 9px 11px">
            <Frame $pad="3px 0 3px 0">
              <Column>
                <Row>
                  <Label htmlFor="thick" $w={77} $end={2}>Line Thick:</Label>
                  <Select id="thick" $w={60}><option>0.002mm</option></Select>
                </Row>
                <Row>
                  <Label htmlFor="shape" $w={77} $end={2}>Line Shape:</Label>
                  <Select id="shape" $w={60} $grey><option>———</option></Select>
                </Row>
              </Column>
            </Frame>
          </GroupBody>
        </PropertyGroup>
      </Groups>
      <SideScroll>
        <ScrollButton aria-label="Scroll up">{icons.up}</ScrollButton>
        <SideThumb />
        <ScrollButton aria-label="Scroll down">{icons.down}</ScrollButton>
      </SideScroll>
    </LeftBody>
  </LeftPanel>
);

/* The drawing uses screen pixels; 25 mm on the sheet is about 90 px. */
const MM = 3.615;
const CX = 346;
const CY = 254;
const range = (a: number, b: number) => Array.from({ length: b - a + 1 }, (_, i) => a + i);

const TopScale = () => (
  <TopRuler aria-hidden="true">
    <rect x="0" y="3" width="100%" height="10" fill="#fff" />
    <line x1="0" x2="100%" y1="13.5" y2="13.5" stroke="#55597a" />
    {range(-19, 19).map((i) => {
      const x = Math.round(CX + i * 5 * MM) + 0.5;
      return <line key={i} x1={x} x2={x} y1={i % 5 ? 10 : 7} y2="13" stroke="#444" />;
    })}
    {range(-3, 3).map((i) => (
      <text key={i} x={CX + i * 25 * MM} y="10" textAnchor="middle" fontFamily="Liberation Sans" fontSize="9" fill="#4a4a50">{i * 25}mm</text>
    ))}
  </TopRuler>
);

const SideScale = () => (
  <LeftRuler aria-hidden="true">
    <rect x="3" y="0" width="10" height="100%" fill="#fff" />
    <line x1="13.5" x2="13.5" y1="0" y2="100%" stroke="#55597a" />
    {range(-14, 14).map((i) => {
      const y = Math.round(CY + i * 5 * MM) + 0.5;
      return <line key={i} x1={i % 5 ? 9 : 7} x2="13" y1={y} y2={y} stroke="#444" />;
    })}
    {range(-2, 2).map((i) => (
      <text key={i} transform={`translate(10 ${CY + i * 25 * MM}) rotate(-90)`} textAnchor="middle" fontFamily="Liberation Sans" fontSize="9" fill="#4a4a50">{i * 25}mm</text>
    ))}
  </LeftRuler>
);

const Flag = ({ x, y }: { x: number; y: number }) => (
  <g transform={`translate(${x} ${y})`}>
    <path d="M.5 0v13" stroke="#333" />
    <path d="M1 2.500h8v7H1z" fill="#f57f17" stroke="#5c3510" />
  </g>
);
const LinkMark = ({ x, y }: { x: number; y: number }) => <g transform={`translate(${x} ${y})`}>{icons.linked}</g>;

const Canvas = () => (
  <Drawing role="img" aria-label="Page 1">
    <path d="M57.500 82.500h578v344h-578z" fill="#fff" stroke="#5f5d64" />
    <path d="M59 427h577V83" fill="none" stroke="#333" />
    <path d="M61.500 85.500h572v337h-572z" fill="none" stroke="#d2cfd6" />
    <g stroke="#e2dbe5" strokeDasharray="3 2">
      {range(-26, 26).filter(Boolean).map((i) => {
        const x = Math.round(CX + i * 3 * MM) + 0.5;
        return <line key={i} x1={x} x2={x} y1="86" y2="422" />;
      })}
      {range(-15, 15).filter(Boolean).map((i) => {
        const y = Math.round(CY + i * 3 * MM) + 0.5;
        return <line key={i} x1="62" x2="633" y1={y} y2={y} />;
      })}
    </g>
    <g stroke="#dfa9b8" strokeDasharray="3 2">
      <line x1="346.5" x2="346.5" y1="57" y2="451" />
      <line x1="31" x2="661" y1="254.5" y2="254.5" />
    </g>
    <circle cx="346" cy="254" r="90" fill="#d4d2d6" stroke="#98969c" />
    <path d="M256 150h37v11h-37z" fill="#d3d1d4" />
    <text x="274.5" y="159" textAnchor="middle" fontFamily="Liberation Sans" fontWeight="700" fontSize="10" fill="#858388">Watch</text>
    <text x="300" y="250" fontFamily="Liberation Sans" fontSize="34" fill="#080808" stroke="#080808" strokeWidth=".6">Julia</text>
    <text x="294" y="285" fontFamily="Liberation Sans" fontSize="23" fill="#080808">2015.02.10</text>
    <rect x="289.5" y="219.500" width="124" height="71" fill="none" stroke="#4a90dc" strokeDasharray="2 2" />
    <g fill="#1684f2">
      {[289, 351, 413].flatMap((x) => [219, 254, 290].map((y) => <rect key={`${x}-${y}`} x={x - 3} y={y - 3} width="7" height="7" />))}
      {[302, 367].flatMap((x) => [227, 247].map((y) => <rect key={`${x}-${y}`} x={x - 1} y={y - 1} width="3" height="3" />))}
    </g>
    <Flag x={359} y={209} />
    <Flag x={398} y={251} />
    <LinkMark x={373} y={224} />
    <LinkMark x={412} y={266} />
  </Drawing>
);

const records = [
  "namemessage", "MichaelI love you", "Paulmarry me?", "Julia2015.02.10", "AnnaHello!",
  "Elsa+52 8118001396", "David5025720627", "JackMy life is yours", "LaurenLife is not always fair",
];

const BatchProcess = () => (
  <BatchPanel>
    <PanelHeader>
      <Grip $h={12} />
      <h2>Batch Process</h2>
      {icons.pin}
    </PanelHeader>
    <BatchTools>
      <Row $h={21} $pad="0 0 0 4px" $gap={0}>
        <CommandButton $w={93}>{icons.folder}Load from File...</CommandButton>
        <CommandButton $gap={3}>{icons.plus}Input...</CommandButton>
      </Row>
      <Row $h={29} $gap={4}>
        <Toggle aria-label="Link mode">{icons.linked}</Toggle>
        <CommandButton $w={76} $gap={1}>{icons.link}Link to Object</CommandButton>
        <Row $gap={0}>
          <Counter $w={44}>Total: 9 /</Counter>
          <Counter $w={54}>Marked: 0</Counter>
        </Row>
      </Row>
      <Row $h={23} $gap={8} $pad="0 0 0 4px">
        <CommandButton $w={74} $gap={3}>{icons.redX}Clear All</CommandButton>
        <PlainButton aria-label="Delete">{icons.redX}</PlainButton>
        <PlainButton aria-label="Clear marks">{icons.uncheckAll}</PlainButton>
        <PlainButton aria-label="Invert marks">{icons.invert}</PlainButton>
      </Row>
    </BatchTools>
    <RecordList>
      {records.map((r, i) => <Record key={r} $on={i === 3}>{r}</Record>)}
      <Pointer width="11" height="15" viewBox="0 0 11 15" aria-hidden="true">
        <path d="M1 1v11l2.500-2.500 2 4.500 1.800-.8-2-4.200H9z" fill="#fff" stroke="#55535a" />
      </Pointer>
    </RecordList>
  </BatchPanel>
);

const Devices = () => (
  <DevicePanel>
    <PanelHeader>
      <Grip $h={12} />
      <h2>Device(s)</h2>
    </PanelHeader>
    <DeviceBody>
      <DeviceButton>{icons.engraver}Engraver 1</DeviceButton>
      <p>Click the button above to start engraving or cutting.</p>
      <DeviceAction>{icons.detect}<span>Detect</span></DeviceAction>
      <DeviceAction>{icons.filter}<span>Filter</span></DeviceAction>
    </DeviceBody>
  </DevicePanel>
);

const TabIcon = ({ color }: { color: string }) => (
  <svg width="16" height="14" viewBox="0 0 16 14" aria-hidden="true">
    <path d="M1.500 2.500h13v10h-13z" fill="#fff" stroke="#55535a" />
    <path d="M2 4l5-2 3 3v4H2z" fill={color} />
  </svg>
);

export default function App() {
  return (
    <Screen>
      <GlobalStyle />
      <Gradients />
      <AppWindow>
        <TitleBar>
          <svg width="12" height="12" viewBox="0 0 12 12" aria-hidden="true">
            <rect width="12" height="12" rx="2" fill="#2a87b8" />
            <path d="M2.500 9.500v-7L6 5.500l3.500-3v7l-1.500 0v-3L6 8 4 6.500v3z" fill="#fff" />
          </svg>
          <Title>MagicArt - [Flat : Page1*]</Title>
          <WindowButtons>
            <PlainButton aria-label="Minimize"><Art s={10}><path d="M1 5.500h8" stroke="#333" /></Art></PlainButton>
            <PlainButton aria-label="Maximize"><Art s={10}><path d="M1.500 1.500h7v7h-7z" stroke="#333" /></Art></PlainButton>
            <PlainButton aria-label="Close"><Art s={10}><path d="M1 1l8 8M9 1L1 9" stroke="#333" /></Art></PlainButton>
          </WindowButtons>
        </TitleBar>
        <MenuBar>
          <MenuList>
            {menus.map(([m, u]) => (
              <button key={m}>
                {u < 0 ? m : <>{m.slice(0, u)}<u>{m[u]}</u>{m.slice(u + 1)}</>}
              </button>
            ))}
          </MenuList>
          <ChildButtons>
            <PlainButton aria-label="Minimize page"><Art s={8}><path d="M2 6h4" stroke="#222" strokeWidth="1.500" /></Art></PlainButton>
            <PlainButton aria-label="Restore page"><Art s={8}><path d="M1 3.500h4v3H1zM3 3V1h4v3.500H5" stroke="#222" /></Art></PlainButton>
            <PlainButton aria-label="Close page">{icons.close}</PlainButton>
          </ChildButtons>
        </MenuBar>
        <Toolbar $h={30}>
          {tool("svgFile", "Import SVG", { $w: 29 })}
          <Separator />
          {tool("curve", "Curve")}
          {tool("ellipse", "Ellipse")}
          {tool("rect", "Rectangle")}
          {tool("hexagon", "Polygon")}
          <Separator $w={5} />
          {tool("grid", "Matrix")}
          <Separator />
          {tool("mirror", "Mirror")}
          {tool("rotate", "Rotate")}
          {tool("rotateText", "Rotate text")}
          {tool("turn", "Turn")}
          <Separator />
          {tool("centerV", "Centre vertically")}
          {tool("centerH", "Centre horizontally")}
          <Separator $w={5} />
          {tool("centerBoth", "Centre")}
          <Caret />
          <Grip $gap={5} />
          {tool("library", "Library", { $w: 29 })}
          <Separator $w={3} />
          {tool("arrow", "Select", { $on: true })}
          <Separator $w={5} />
          {tool("text", "Text")}
          <Caret />
          <Separator />
          {tool("ring", "Ring text")}
          <Caret />
          <Separator $w={5} />
          {tool("pen", "Freehand")}
          <Separator $w={5} />
          {tool("ab", "Outline text")}
          {tool("abc", "Text on path")}
          <Separator />
          {tool("picture", "Picture")}
          <Separator />
          {tool("eraser", "Eraser")}
          <Separator $w={5} />
          {tool("aPlain", "Style")}
          <Caret />
          {tool("aBox", "Raised style")}
          <Caret />
          {tool("aBoxGold", "Gold style")}
          <Caret />
          {tool("aPink", "Fill style")}
          {tool("aBox", "Box style")}
          <Separator $w={5} />
          {tool("aStripe", "Stripe style")}
          {tool("aDouble", "Shadow style")}
          <Grip $gap={5} />
          {tool("crosshair", "Crosshair", { $on: true })}
          {tool("rulerGuide", "Guides")}
          <Caret />
        </Toolbar>
        <Work>
          <ObjectProperty />
          <DocumentArea>
            <TabRow>
              <DocTab>Flat : Page1*</DocTab>
              <TabControls>
                <PlainButton aria-label="Previous tab"><Art s={5} h={8}><path d="M4.500 1v6L1 4z" stroke="#222" /></Art></PlainButton>
                <PlainButton aria-label="Next tab"><Art s={5} h={8}><path d="M.5 1v6L4 4z" stroke="#222" /></Art></PlainButton>
                <PlainButton aria-label="Close tab">{icons.close}</PlainButton>
              </TabControls>
            </TabRow>
            <BlueFrame>
              <Sheet>
                <RulerCorner><Art s={10}><path d="M1 2l2 1M4 1l1 2M2 5l2 1M7 3l2 1M6 6l2 2M4 8l1 1M8 8h1" stroke="#333" /></Art></RulerCorner>
                <TopScale />
                <SideScale />
                <Canvas />
                <BarV>
                  <ScrollButton aria-label="Scroll up">{icons.up}</ScrollButton>
                  <Thumb />
                  <ScrollButton aria-label="Scroll down">{icons.down}</ScrollButton>
                </BarV>
                <BarH>
                  <ScrollButton aria-label="Scroll left">{icons.left}</ScrollButton>
                  <Thumb />
                  <ScrollButton aria-label="Scroll right">{icons.right}</ScrollButton>
                </BarH>
                <Corner />
              </Sheet>
            </BlueFrame>
          </DocumentArea>
          <BatchProcess />
          <Devices />
          <SideTabs>
            <SideTab $h={86}><TabIcon color="#2f8f5b" /><span>Design Sample</span></SideTab>
            <SideTab $h={53}><TabIcon color="#26327f" /><span>Symbol</span></SideTab>
            <SideTab $h={74}><TabIcon color="#93b052" /><span>File Explorer</span></SideTab>
          </SideTabs>
        </Work>
        <Toolbar $h={27}>
          {tool("newFile", "New", { $w: 22 })}
          {tool("open", "Open", { $w: 22 })}
          {tool("save", "Save", { $w: 24 })}
          <Separator />
          {tool("print", "Print", { $w: 24 })}
          <Separator />
          {tool("cut", "Cut", { $w: 24 })}
          {tool("copy", "Copy", { $w: 22 })}
          {tool("paste", "Paste", { $w: 22, $dim: true })}
          <Separator />
          {tool("undo", "Undo", { $w: 22 })}
          {tool("redo", "Redo", { $w: 22, $dim: true })}
          <Grip $gap={11} />
          {tool("zoomIn", "Zoom in", { $w: 23 })}
          {tool("zoomOut", "Zoom out", { $w: 23 })}
          <Separator />
          <ZoomSelect aria-label="Zoom"><option>Fit to page</option></ZoomSelect>
          <Separator />
          {tool("zoomBox", "Zoom to area", { $w: 22 })}
          {tool("zoomText", "Zoom to text", { $w: 22 })}
          {tool("zoomPage", "Zoom to page", { $w: 22 })}
          <Separator />
          {tool("hand", "Pan", { $w: 23 })}
        </Toolbar>
        <StatusBar>
          <StatusReady>Ready</StatusReady>
          <StatusCoords><span>X: 95.86 mm</span><span>Y: -43.89 mm</span></StatusCoords>
          <StatusKeys><span>CAP</span><span>NUM</span><span>SCRL</span></StatusKeys>
        </StatusBar>
      </AppWindow>
    </Screen>
  );
}
